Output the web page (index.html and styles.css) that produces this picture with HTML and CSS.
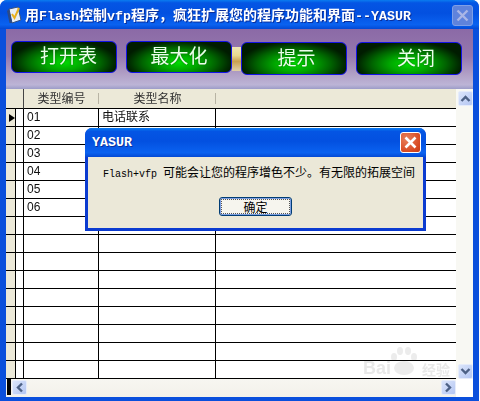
FILE: index.html
```html
<!DOCTYPE html>
<html lang="zh-CN">
<head>
<meta charset="utf-8">
<title>YASUR</title>
<link rel="stylesheet" href="styles.css">
</head>
<body>
<div class="window">
  <header class="titlebar">
    <svg class="app-icon" width="17" height="20" viewBox="0 0 17 20">
      <path d="M3 4 L12 2 L15 15 L6 18 Z" fill="#e8eef8" stroke="#35507f"/>
      <path d="M3 4 L6 18 L3.5 18 L1 6 Z" fill="#2c4a86"/>
      <path d="M6 9 L8.5 13 L13 3" fill="none" stroke="#e8b020" stroke-width="2"/>
    </svg>
    <span class="title">用<span class="lat">Flash</span>控制<span class="lat">vfp</span>程序，疯狂扩展您的程序功能和界面<span class="lat">--YASUR</span></span>
    <span class="win-close">
      <svg width="13" height="13" viewBox="0 0 13 13"><path d="M1.5 1.5 L11.5 11.5 M11.5 1.5 L1.5 11.5" stroke="#a9b6e6" stroke-width="2.4"/></svg>
    </span>
  </header>

  <div class="client">
    <div class="toolbar">
      <button class="flash-btn off-left">打开表</button>
      <button class="flash-btn">最大化</button>
      <button class="flash-btn low off-small">提示</button>
      <button class="flash-btn low off-right">关闭</button>
    </div>

    <div class="grid-area">
      <div class="table-wrap">
        <table class="data">
          <colgroup><col class="c-sel"><col class="c-sel2"><col class="c-code"><col class="c-name"><col class="c-rest"></colgroup>
          <thead>
            <tr><th colspan="2" class="corner"></th><th class="sep">类型编号</th><th class="sep">类型名称</th><th></th></tr>
          </thead>
          <tbody>
            <tr><td class="sel"><i class="pointer"></i></td><td class="line"></td><td class="line">01</td><td class="line">电话联系</td><td></td></tr>
            <tr><td class="sel"></td><td class="line"></td><td class="line">02</td><td class="line"></td><td></td></tr>
            <tr><td class="sel"></td><td class="line"></td><td class="line">03</td><td class="line"></td><td></td></tr>
            <tr><td class="sel"></td><td class="line"></td><td class="line">04</td><td class="line"></td><td></td></tr>
            <tr><td class="sel"></td><td class="line"></td><td class="line">05</td><td class="line"></td><td></td></tr>
            <tr><td class="sel"></td><td class="line"></td><td class="line">06</td><td class="line"></td><td></td></tr>
            <tr><td class="sel"></td><td class="line"></td><td class="line"></td><td class="line"></td><td></td></tr>
            <tr><td class="sel"></td><td class="line"></td><td class="line"></td><td class="line"></td><td></td></tr>
            <tr><td class="sel"></td><td class="line"></td><td class="line"></td><td class="line"></td><td></td></tr>
            <tr><td class="sel"></td><td class="line"></td><td class="line"></td><td class="line"></td><td></td></tr>
            <tr><td class="sel"></td><td class="line"></td><td class="line"></td><td class="line"></td><td></td></tr>
            <tr><td class="sel"></td><td class="line"></td><td class="line"></td><td class="line"></td><td></td></tr>
            <tr><td class="sel"></td><td class="line"></td><td class="line"></td><td class="line"></td><td></td></tr>
            <tr><td class="sel"></td><td class="line"></td><td class="line"></td><td class="line"></td><td></td></tr>
            <tr><td class="sel"></td><td class="line"></td><td class="line"></td><td class="line"></td><td></td></tr>
          </tbody>
        </table>
      </div>
      <div class="vscroll">
        <span class="sb-btn"><svg width="11" height="9" viewBox="0 0 11 9"><path d="M1.5 7 L5.5 3 L9.5 7" fill="none" stroke="#4d6185" stroke-width="2.4"/></svg></span>
        <span class="sb-btn"><svg width="11" height="9" viewBox="0 0 11 9"><path d="M1.5 2 L5.5 6 L9.5 2" fill="none" stroke="#4d6185" stroke-width="2.4"/></svg></span>
      </div>
      <div class="hscroll">
        <i class="hs-mark"></i>
        <span class="sb-btn"><svg width="9" height="11" viewBox="0 0 9 11"><path d="M7 1.5 L3 5.5 L7 9.5" fill="none" stroke="#4d6185" stroke-width="2.4"/></svg></span>
        <span class="sb-btn hs-right"><svg width="9" height="11" viewBox="0 0 9 11"><path d="M2 1.5 L6 5.5 L2 9.5" fill="none" stroke="#4d6185" stroke-width="2.4"/></svg></span>
      </div>
      <div class="corner-box"></div>
    </div>
  </div>

  <div class="watermark">
    <svg class="paw" width="30" height="30" viewBox="0 0 30 30">
      <g fill="#ececec"><ellipse cx="5" cy="10" rx="3" ry="4"/><ellipse cx="11" cy="4" rx="3" ry="4"/><ellipse cx="19" cy="4" rx="3" ry="4"/><ellipse cx="25" cy="10" rx="3" ry="4"/><ellipse cx="15" cy="21" rx="10" ry="7"/></g>
    </svg>
    <span class="wm-bai">Bai</span>
    <span class="wm-exp">经验</span>
  </div>

  <section class="dialog">
    <header class="dlg-title">
      <span class="dlg-name">YASUR</span>
      <span class="dlg-close">
        <svg width="13" height="13" viewBox="0 0 13 13"><path d="M1.5 1.5 L11.5 11.5 M11.5 1.5 L1.5 11.5" stroke="#fff" stroke-width="2.6"/></svg>
      </span>
    </header>
    <div class="dlg-body">
      <p class="dlg-msg"><span class="msg-lat">Flash+vfp </span>可能会让您的程序增色不少。有无限的拓展空间</p>
      <button class="dlg-ok"><span class="ok-inner">确定</span></button>
    </div>
  </section>
</div>
</body>
</html>
```

FILE: styles.css
```css
* { box-sizing: border-box; }
html, body { margin: 0; padding: 0; background: #fff; }
body { width: 480px; height: 401px; overflow: hidden; font-family: "Liberation Sans", "Noto Sans CJK SC", sans-serif; font-size: 12px; }

.window {
  position: relative;
  width: 479px;
  height: 401px;
  display: flex;
  flex-direction: column;
  background: #0a4fdc;
  border-radius: 7px 7px 0 0;
  overflow: hidden;
}

/* title bar */
.titlebar {
  height: 29px;
  flex: none;
  display: flex;
  align-items: center;
  padding: 0 6px 0 6px;
  background: linear-gradient(#0a7cf0 0, #0455e4 10%, #0350e0 45%, #0a62f0 85%, #0349d4 100%);
}
.app-icon { flex: none; margin-right: 2px; margin-top: 1px; }
.title {
  flex: 1;
  white-space: nowrap;
  color: #fff;
  font: bold 14px "Noto Sans CJK SC", sans-serif;
  line-height: 29px;
  text-shadow: 1px 1px 0 #0a2f9c;
}
.lat { font: bold 13.33px "Liberation Mono", monospace; }
.win-close {
  flex: none;
  width: 21px;
  height: 21px;
  margin-top: 2px;
  display: flex;
  align-items: center;
  justify-content: center;
  background: #5f83dc;
  border: 1px solid #7f9fe6;
  border-radius: 3px;
}

/* client area */
.client {
  flex: 1;
  margin: 0 6px 4px 6px;
  display: flex;
  flex-direction: column;
  min-height: 0;
}
.toolbar {
  height: 60px;
  flex: none;
  display: flex;
  align-items: flex-start;
  gap: 9px;
  padding: 12px 0 0 5px;
  background:
    linear-gradient(#eee6b4 0, #e8d890 35%, #c9a050 60%, #e0d0a8 100%) no-repeat 226px 18px / 9px 24px,
    linear-gradient(#8b6aa6 0, #9577ae 45%, #b3a3c8 78%, #bcb4d6 93%, #9c9cc8 100%);
}
.flash-btn {
  width: 106px;
  height: 32px;
  padding: 0 0 5px 0;
  border: 1px solid #1414e6;
  border-radius: 6px;
  color: #eaffea;
  font: 19px/1 "Noto Sans CJK SC", sans-serif;
  text-shadow: 0 0 2px #0a6a0a;
  background: radial-gradient(ellipse 52% 72% at 50% 68%, #00dc00 0, #00a800 35%, #006400 68%, #003000 90%, #001c00 100%);
}
.low { margin-top: 1px; height: 33px; }
.off-left { padding-left: 9px; }
.off-small { padding-left: 5px; }
.off-right { padding-left: 14px; }

/* data grid */
.grid-area {
  flex: 1;
  min-height: 0;
  display: grid;
  grid-template-columns: 450px 17px;
  grid-template-rows: 290px 18px;
}
.table-wrap { background: #fff; overflow: hidden; }
.data {
  width: 450px;
  table-layout: fixed;
  border-collapse: separate;
  border-spacing: 0;
  color: #111;
}
.c-sel { width: 10px; }
.c-sel2 { width: 8px; }
.c-code { width: 75px; }
.c-name { width: 117px; }
.data th {
  height: 20px;
  padding: 0;
  font-weight: normal;
  font-size: 12px;
  line-height: 18px;
  color: #333;
  background-color: #ece9d8;
  border-bottom: 1px solid #000;
}
.corner { border-right: 1px solid #444; }
.sep {
  background-image: linear-gradient(#b8b4a4, #b8b4a4);
  background-repeat: no-repeat;
  background-position: right 4px;
  background-size: 1px 11px;
}
.data td {
  height: 18px;
  padding: 0 0 0 3px;
  line-height: 17px;
  white-space: nowrap;
  border-bottom: 1px solid #000;
  background: #fff;
}
.data td.sel { padding: 0; background: #ece9d8; border-right: 1px solid #000; }
.data td.line { border-right: 1px solid #000; }
.pointer {
  display: block;
  width: 0;
  height: 0;
  margin-left: 3px;
  border-left: 6px solid #000;
  border-top: 4px solid transparent;
  border-bottom: 4px solid transparent;
}

/* scrollbars */
.vscroll {
  display: flex;
  flex-direction: column;
  justify-content: space-between;
  align-items: center;
  padding: 2px 0 0 2px;
  background: #f8f8f3;
}
.hscroll {
  display: flex;
  align-items: center;
  padding: 0 0 2px 1px;
  background: linear-gradient(#f7f6f1, #f3f1ea);
}
.hs-mark { width: 4px; height: 16px; background: #000; margin-right: 1px; }
.hs-right { margin-left: auto; }
.corner-box { background: #fff; }
.sb-btn {
  width: 15px;
  height: 15px;
  display: flex;
  align-items: center;
  justify-content: center;
  background: linear-gradient(135deg, #dbe5fb, #b4c6f2);
  border: 1px solid #e6ecfa;
  border-radius: 2px;
}

/* watermark */
.watermark {
  position: absolute;
  left: 362px;
  top: 346px;
  width: 90px;
  height: 34px;
  pointer-events: none;
  mix-blend-mode: multiply;
}
.paw { position: absolute; left: 27px; top: 1px; }
.wm-bai {
  position: absolute;
  left: 1px;
  top: 11px;
  color: #e8e8e8;
  font: bold 18px/22px "Liberation Sans", sans-serif;
}
.wm-exp {
  position: absolute;
  left: 60px;
  top: 14px;
  color: #e8e8e8;
  font: bold 14px/18px "Noto Sans CJK SC", sans-serif;
  white-space: nowrap;
}

/* message box */
.dialog {
  position: absolute;
  left: 85px;
  top: 128px;
  width: 341px;
  height: 103px;
  display: flex;
  flex-direction: column;
  border-radius: 7px 7px 0 0;
  overflow: hidden;
  background: #0b3bd0;
  padding: 0 3px 3px 3px;
}
.dlg-title {
  height: 29px;
  flex: none;
  margin: 0 -3px;
  padding: 0 5px 0 7px;
  display: flex;
  align-items: center;
  justify-content: space-between;
  background: linear-gradient(#0a7cf0 0, #0455e4 12%, #0350e0 45%, #0a62f0 85%, #0349d4 100%);
}
.dlg-name {
  color: #fff;
  font: bold 13.33px "Liberation Mono", monospace;
  text-shadow: 1px 1px 0 #0a2f9c;
}
.dlg-close {
  width: 21px;
  height: 21px;
  display: flex;
  align-items: center;
  justify-content: center;
  background: radial-gradient(circle at 30% 30%, #e8805c, #d84a22 70%, #c43a18);
  border: 1px solid #fff;
  border-radius: 3px;
}
.dlg-body {
  flex: 1;
  background: #ebe8d8;
  display: flex;
  flex-direction: column;
  align-items: center;
}
.dlg-msg {
  margin: 6px 0 0 0;
  align-self: flex-start;
  padding-left: 15px;
  white-space: nowrap;
  font: 12px/18px "Noto Sans CJK SC", sans-serif;
  color: #000;
}
.msg-lat { font: 10px "Liberation Mono", monospace; }
.dlg-ok {
  width: 73px;
  height: 19px;
  margin-top: 16px;
  padding: 0;
  background: #f6f5ee;
  border: 1px solid #003c74;
  border-radius: 3px;
  box-shadow: inset 0 0 0 1px #7c9ee0;
  font: 12px/1 "Noto Sans CJK SC", sans-serif;
  color: #000;
}
.ok-inner {
  display: flex;
  align-items: center;
  justify-content: center;
  height: 13px;
  margin: 2px;
  outline: 1px dotted #555;
}
```
